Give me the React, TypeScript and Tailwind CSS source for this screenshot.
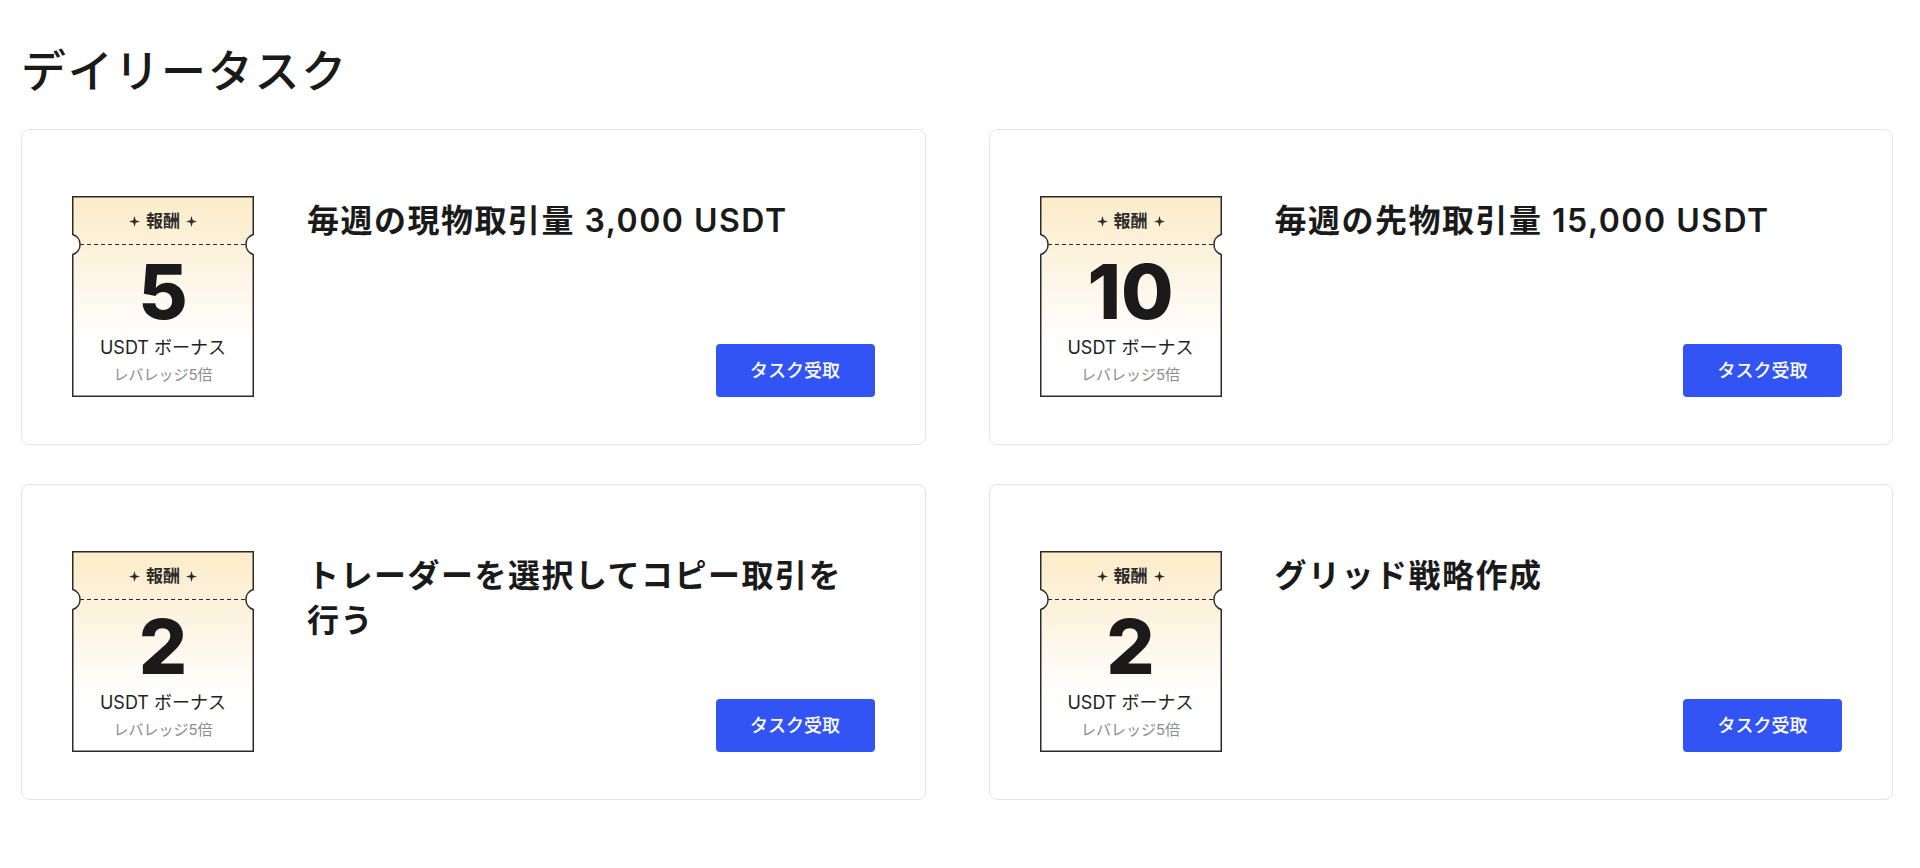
import React from "react";

interface Task {
    id: number;
    title: string;
    reward: number;
}

const tasks: Task[] = [
    { id: 1, title: "毎週の現物取引量 3,000 USDT", reward: 5 },
    { id: 2, title: "毎週の先物取引量 15,000 USDT", reward: 10 },
    { id: 3, title: "トレーダーを選択してコピー取引を行う", reward: 2 },
    { id: 4, title: "グリッド戦略作成", reward: 2 },
];

const Sparkle = () => (
    <svg width="11" height="11" viewBox="0 0 10 10" className="shrink-0">
        <path d="M5 0 L6.1 3.9 L10 5 L6.1 6.1 L5 10 L3.9 6.1 L0 5 L3.9 3.9 Z" fill="#2b2b2b" />
    </svg>
);

function Ticket({ reward, id }: { reward: number; id: number }) {
    const gid = `ticket-grad-${id}`;
    return (
        <div className="relative w-[182px] h-[201px] shrink-0">
            {/* ticket outline with side notches */}
            <svg className="absolute inset-0" width="182" height="201" viewBox="0 0 182 201">
                <defs>
                    <linearGradient id={gid} x1="0" y1="0" x2="0" y2="1">
                        <stop offset="0" stopColor="#fcecc9" />
                        <stop offset="0.25" stopColor="#fdf1da" />
                        <stop offset="0.72" stopColor="#ffffff" />
                        <stop offset="1" stopColor="#ffffff" />
                    </linearGradient>
                </defs>
                <path
                    d="M0.75 0.75 H181.25 V38.5 A10.5 10.5 0 0 0 181.25 58.5 V200.25 H0.75 V58.5 A10.5 10.5 0 0 0 0.75 38.5 Z"
                    fill={`url(#${gid})`}
                    stroke="#2b2b2b"
                    strokeWidth="1.5"
                />
                <line x1="8" y1="48.5" x2="174" y2="48.5" stroke="#2b2b2b" strokeWidth="1.2" strokeDasharray="4 3" />
            </svg>
            <div className="relative flex flex-col items-center h-full">
                <div className="h-[48px] pt-[3px] flex items-center justify-center gap-[6px] text-[17px] font-bold text-[#2b2b2b]">
                    <Sparkle />
                    <span>報酬</span>
                    <Sparkle />
                </div>
                <div className="pt-[9px] text-[76px] leading-none font-extrabold text-[#1a1a1a]">{reward}</div>
                <div className="mt-[7px] text-[18px] leading-[24px] text-[#222]">USDT ボーナス</div>
                <div className="mt-[5px] text-[15px] leading-[20px] text-[#8c8c8c]">レバレッジ5倍</div>
            </div>
        </div>
    );
}

function TaskCard({ task }: { task: Task }) {
    return (
        <div className="flex bg-white border-[1.5px] border-[#e4e4e4] rounded-lg pl-[50px] pr-[50px] pt-[66px] pb-[47px]">
            <Ticket reward={task.reward} id={task.id} />
            <div className="flex-1 flex flex-col justify-between ml-[53px]">
                <h3 className="pt-[2px] text-[32px] leading-[45px] font-semibold text-[#1a1a1a] tracking-[1.5px]">
                    {task.title}
                </h3>
                <button className="self-end w-[159px] h-[53px] rounded bg-[#3354f4] text-white text-[18px] font-medium">
                    タスク受取
                </button>
            </div>
        </div>
    );
}

export default function App() {
    return (
        <div
            className="min-h-screen bg-white pt-[45px] pl-[21px]"
            style={{ fontFamily: 'Inter, "Noto Sans CJK JP", "Noto Sans", sans-serif' }}
        >
            <h1 className="text-[45px] leading-[53px] font-medium tracking-[1.7px] text-[#1a1a1a] mb-[31px]">
                デイリータスク
            </h1>
            <div className="w-[1872px] grid grid-cols-2 gap-x-[63px] gap-y-[39px]">
                {tasks.map((task) => (
                    <TaskCard key={task.id} task={task} />
                ))}
            </div>
        </div>
    );
}
